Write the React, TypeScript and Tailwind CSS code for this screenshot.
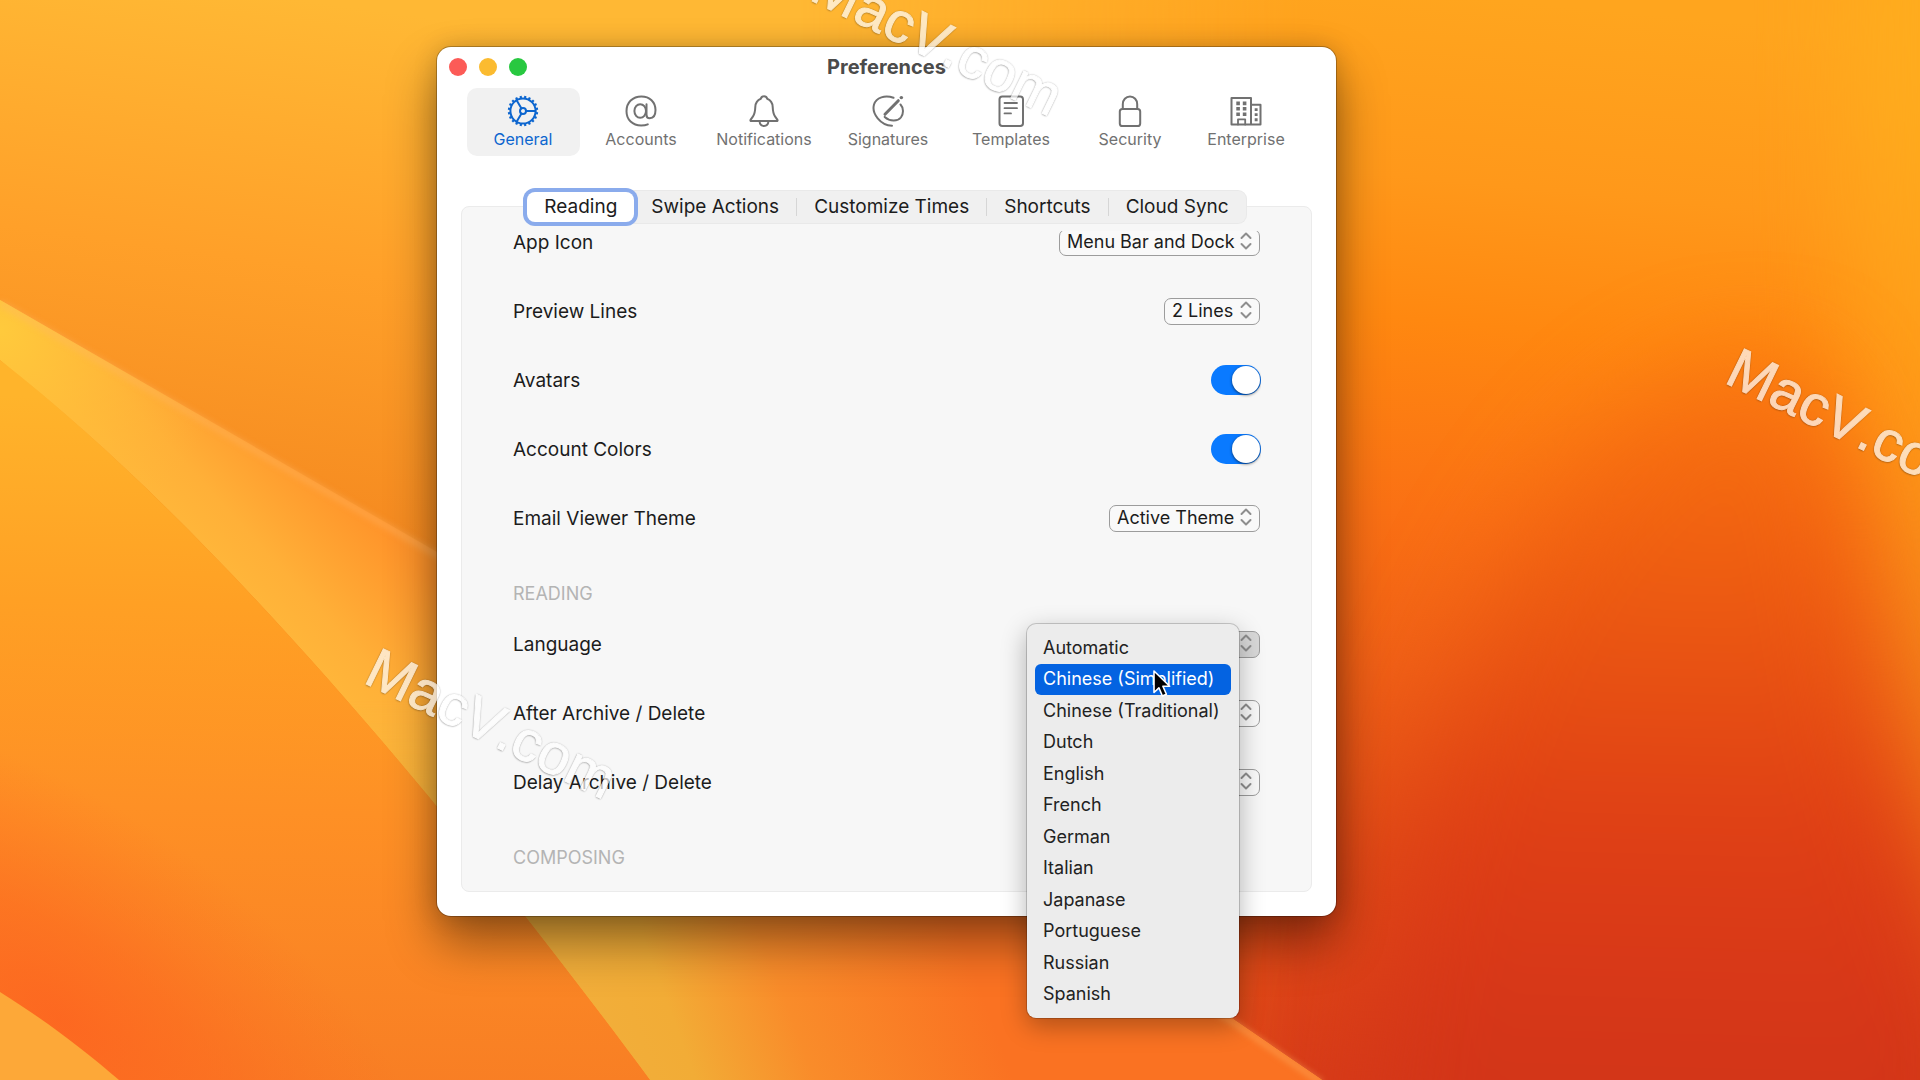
import { useState } from "react";
import type { ReactNode } from "react";

const gearTeeth = Array.from({ length: 20 }, (_, i) => i * 18);

function Glyph({ children }: { children: ReactNode }) {
  return (
    <svg
      viewBox="0 0 32 32"
      className="size-8"
      fill="none"
      stroke="currentColor"
      strokeWidth="2"
      strokeLinecap="round"
      strokeLinejoin="round"
      aria-hidden="true"
    >
      {children}
    </svg>
  );
}

const GearIcon = () => (
  <Glyph>
    <circle cx="16" cy="16" r="12.6" />
    {gearTeeth.map((a) => (
      <path key={a} d="M16 3.4V0.800" strokeWidth="2.2" strokeLinecap="butt" transform={`rotate(${a + 9} 16 16)`} />
    ))}
    <circle cx="16" cy="16" r="3" />
    <path d="M19 16h9.5M14.5 13.4 9.6 5.2M14.5 18.6l-4.9 8.2" />
  </Glyph>
);

const AtIcon = () => (
  <Glyph>
    <ellipse cx="15.2" cy="16" rx="5.8" ry="6.8" />
    <path d="M21.5 9.2v10.5c0 2.2 1 3.6 3.2 3.6 3.6 0 5.8-3.2 5.8-8.2C30.500 7 24.600 1.500 16.400 1.500 7.700 1.500 1.500 7.500 1.500 16.200c0 8.500 6 14.300 14.700 14.300 2.500 0 4.800-.4 6.600-1.200" />
  </Glyph>
);

const BellIcon = () => (
  <Glyph>
    <path d="M16 1.300c-1.700 0-2.800 1-3.200 2.500-3.400 1.300-5.300 4.200-5.500 8.200-.2 4.800-.6 7-2.300 9.400L2.700 24.600c-.6.9-.2 1.500.8 1.500h25c1 0 1.400-.6.800-1.500L27 21.400c-1.700-2.400-2.100-4.600-2.300-9.400-.2-4-2.100-6.900-5.500-8.200-.4-1.500-1.500-2.500-3.200-2.500z" />
    <path d="M11.600 26.500c.2 2.700 1.900 4.400 4.400 4.400s4.200-1.700 4.400-4.400" />
  </Glyph>
);

const SignatureIcon = () => (
  <Glyph>
    <path d="M21.500 2.800C13-.4 4.200 2.600 2 9.500-.6 18.500 8.500 30.500 20 30.800" />
    <path d="M28.500 9.500c3 3.200 3.400 9 .4 13-3.200 4-11 4.200-16.200-.6" />
    <path d="M13 19.300 26.300 5.700" strokeWidth="3" />
    <path d="M29.300 2.600h.1" strokeWidth="3.400" />
  </Glyph>
);

const TemplateIcon = () => (
  <Glyph>
    <rect x="4.500" y="1.500" width="23.500" height="29.500" rx="2.800" />
    <path d="M9.500 8h12.500M9.500 13.200h12.500M9.500 18.400h6.500" strokeWidth="1.800" />
  </Glyph>
);

const LockIcon = () => (
  <Glyph>
    <rect x="5.800" y="14" width="20.400" height="17" rx="2.600" />
    <path d="M8.800 14V9.200C8.800 4.800 11.800 1.500 16 1.500s7.200 3.300 7.200 7.700V14" />
  </Glyph>
);

const BuildingIcon = () => (
  <Glyph>
    <path d="M1.500 3h19.500v26.500H1.500zM21 9.700h9.500v19.800H21z" />
    <path d="M8 29.500v-5.200h7.200v5.200" strokeWidth="1.800" />
    <g fill="currentColor" stroke="none">
      <path d="M6.300 6.600h3.600v3.600H6.300zM12.800 6.600h3.600v3.600h-3.600zM6.300 12h3.600v3.600H6.300zM12.800 12h3.600v3.600h-3.600zM6.300 17.400h3.600V21H6.300zM12.800 17.400h3.600V21h-3.600z" />
      <path d="M24.700 13.200h2.900v2.900h-2.900zM24.700 18.200h2.900v2.900h-2.900zM24.700 23.300h2.900v2.900h-2.900z" />
    </g>
  </Glyph>
);

const sections = [
  { name: "General", icon: <GearIcon />, width: "w-[113px]" },
  { name: "Accounts", icon: <AtIcon />, width: "w-[113px]" },
  { name: "Notifications", icon: <BellIcon />, width: "w-[123px]" },
  { name: "Signatures", icon: <SignatureIcon />, width: "w-[115px]" },
  { name: "Templates", icon: <TemplateIcon />, width: "w-[121px]" },
  { name: "Security", icon: <LockIcon />, width: "w-[107px]" },
  { name: "Enterprise", icon: <BuildingIcon />, width: "w-[115px]" },
];

const tabs = ["Reading", "Swipe Actions", "Customize Times", "Shortcuts", "Cloud Sync"];

const languages = [
  "Automatic",
  "Chinese (Simplified)",
  "Chinese (Traditional)",
  "Dutch",
  "English",
  "French",
  "German",
  "Italian",
  "Japanase",
  "Portuguese",
  "Russian",
  "Spanish",
];

function Row({ id, label, children }: { id: string; label: string; children: ReactNode }) {
  return (
    <div className="flex h-[69px] items-center justify-between">
      <label htmlFor={id} className="pt-0.5">
        {label}
      </label>
      {children}
    </div>
  );
}

function Picker({ id, value, width, active }: { id: string; value: string; width: string; active?: boolean }) {
  return (
    <div className={`relative mr-px h-[27px] ${width}`}>
      <select
        id={id}
        className={`h-full w-full appearance-none rounded-[7px] border border-[#9c9c9c] pl-[7px] text-lg leading-6 outline-none ${
          active ? "bg-[#d8d8d8]" : "bg-[#f9f9f9]"
        }`}
      >
        <option>{value}</option>
      </select>
      <svg
        viewBox="0 0 12 18"
        className="pointer-events-none absolute top-1 right-2 h-[18px] w-3"
        fill="none"
        stroke="#8e8e8e"
        strokeWidth="2"
        strokeLinecap="round"
        strokeLinejoin="round"
        aria-hidden="true"
      >
        <path d="M1.500 6 6 1.500 10.500 6M1.500 12 6 16.500 10.500 12" />
      </svg>
    </div>
  );
}

function Toggle({ id }: { id: string }) {
  const [on, setOn] = useState(true);
  return (
    <span className="relative h-[30px] w-[50px]">
      <input
        id={id}
        type="checkbox"
        role="switch"
        checked={on}
        onChange={() => setOn(!on)}
        className="peer block h-full w-full appearance-none rounded-full bg-[#d5d5d5] checked:bg-[#0a7aff]"
      />
      <span className="pointer-events-none absolute top-px left-px size-7 rounded-full bg-white shadow-[0_1px_3px_rgba(0,0,0,0.6)] peer-checked:left-[21px]" />
    </span>
  );
}

function Heading({ children }: { children: ReactNode }) {
  return <h2 className="h-[57px] pt-[27px] text-lg leading-[30px] text-[#b4b4b4]">{children}</h2>;
}

function Wallpaper() {
  return (
    <svg
      viewBox="0 0 1920 1080"
      preserveAspectRatio="xMidYMid slice"
      className="absolute inset-0 h-full w-full"
      aria-hidden="true"
    >
      <defs>
        <linearGradient id="sky" gradientUnits="userSpaceOnUse" x1="300" y1="0" x2="230" y2="520">
          <stop offset="0" stopColor="#ffb834" />
          <stop offset="0.5" stopColor="#ffa029" />
          <stop offset="1" stopColor="#f58a20" />
        </linearGradient>
        <linearGradient id="east" gradientUnits="userSpaceOnUse" x1="1500" y1="0" x2="1400" y2="1080">
          <stop offset="0" stopColor="#ffa51e" />
          <stop offset="0.17" stopColor="#ff981a" />
          <stop offset="0.3" stopColor="#ff8810" />
          <stop offset="0.48" stopColor="#fa7014" />
          <stop offset="0.62" stopColor="#f06016" />
          <stop offset="0.8" stopColor="#e04a16" />
          <stop offset="1" stopColor="#d83c18" />
        </linearGradient>
        <linearGradient id="eastMask" gradientUnits="userSpaceOnUse" x1="800" y1="0" x2="1300" y2="0">
          <stop offset="0" stopColor="#fff" stopOpacity="0" />
          <stop offset="1" stopColor="#fff" />
        </linearGradient>
        <mask id="fadeEast">
          <rect width="1920" height="1080" fill="url(#eastMask)" />
        </mask>
        <linearGradient id="rim" gradientUnits="userSpaceOnUse" x1="0" y1="100" x2="0" y2="1000">
          <stop offset="0" stopColor="#ffac1e" />
          <stop offset="0.35" stopColor="#ff9a18" />
          <stop offset="0.6" stopColor="#f6881a" />
          <stop offset="1" stopColor="#ee6a18" />
        </linearGradient>
        <linearGradient id="dome" gradientUnits="userSpaceOnUse" x1="1680" y1="330" x2="1660" y2="1080">
          <stop offset="0" stopColor="#fa7a12" />
          <stop offset="0.18" stopColor="#f56a10" />
          <stop offset="0.4" stopColor="#ea5612" />
          <stop offset="0.65" stopColor="#df4015" />
          <stop offset="0.85" stopColor="#d83818" />
          <stop offset="1" stopColor="#d23518" />
        </linearGradient>
        <linearGradient id="ray" gradientUnits="userSpaceOnUse" x1="240" y1="590" x2="350" y2="490">
          <stop offset="0" stopColor="#ffb63a" />
          <stop offset="0.3" stopColor="#ffb038" />
          <stop offset="1" stopColor="#ff942a" />
        </linearGradient>
        <linearGradient id="rayLow" gradientUnits="userSpaceOnUse" x1="590" y1="1010" x2="940" y2="880">
          <stop offset="0" stopColor="#f2ae3a" />
          <stop offset="0.2" stopColor="#f2ac36" />
          <stop offset="0.5" stopColor="#f98c2a" />
          <stop offset="1" stopColor="#fa7222" />
        </linearGradient>
        <linearGradient id="rayMask" gradientUnits="userSpaceOnUse" x1="0" y1="700" x2="0" y2="900">
          <stop offset="0" stopColor="#fff" stopOpacity="0" />
          <stop offset="1" stopColor="#fff" />
        </linearGradient>
        <mask id="fadeRay">
          <rect width="1920" height="1080" fill="url(#rayMask)" />
        </mask>
        <radialGradient id="apex" gradientUnits="userSpaceOnUse" cx="0" cy="330" r="230">
          <stop offset="0" stopColor="#ffca3c" />
          <stop offset="1" stopColor="#ffb838" stopOpacity="0" />
        </radialGradient>
        <linearGradient id="south" gradientUnits="userSpaceOnUse" x1="180" y1="400" x2="160" y2="1080">
          <stop offset="0" stopColor="#ffb42b" />
          <stop offset="0.3" stopColor="#ffa024" />
          <stop offset="0.6" stopColor="#fe9025" />
          <stop offset="1" stopColor="#f87e24" />
        </linearGradient>
        <radialGradient
          id="ember"
          gradientUnits="userSpaceOnUse"
          cx="0"
          cy="0"
          r="1"
          gradientTransform="translate(60 1020) rotate(35) scale(440 210)"
        >
          <stop offset="0" stopColor="#fd6520" stopOpacity="0.9" />
          <stop offset="0.4" stopColor="#fd6820" stopOpacity="0.6" />
          <stop offset="1" stopColor="#fd7022" stopOpacity="0" />
        </radialGradient>
        <filter id="soft" x="-30%" y="-30%" width="160%" height="160%" colorInterpolationFilters="sRGB">
          <feGaussianBlur stdDeviation="50" />
        </filter>
        <filter id="line" x="-5%" y="-5%" width="110%" height="110%" colorInterpolationFilters="sRGB">
          <feGaussianBlur stdDeviation="3" />
        </filter>
      </defs>
      <rect width="1920" height="1080" fill="url(#sky)" />
      <g mask="url(#fadeEast)">
        <rect width="1920" height="1080" fill="url(#east)" />
      </g>
      <path d="M1850-150h300v1400h-200c-20-200-70-450-90-650-20-200-20-500-10-750z" fill="url(#rim)" filter="url(#soft)" />
      <path
        d="M1340 1300c20-250 60-520 160-710 70-130 170-225 260-225 70 0 90 100 110 260 20 150 70 260 120 400v275z"
        fill="url(#dome)"
        filter="url(#soft)"
      />
      <path d="M0 300 437 552 1230 1017 1322 1080H650C480 850 230 540 0 360z" fill="url(#ray)" />
      <g mask="url(#fadeRay)">
        <path d="M0 300 437 552 1230 1017 1322 1080H650C480 850 230 540 0 360z" fill="url(#rayLow)" />
      </g>
      <path d="M0 300 437 552V810C300 650 150 490 0 360z" fill="url(#apex)" />
      <path d="M0 303 437 555 1230 1020 1322 1083" fill="none" stroke="#ffb868" strokeOpacity="0.5" strokeWidth="5" filter="url(#line)" />
      <path d="M0 360C230 540 480 850 650 1080H0z" fill="url(#south)" />
      <path d="M0 360C230 540 480 850 650 1080H0z" fill="url(#ember)" />
      <path d="M0 992c45 28 84 58 119 88H0z" fill="#fda838" />
    </svg>
  );
}

function Watermark({ place }: { place: string }) {
  return (
    <div
      aria-hidden="true"
      className={`pointer-events-none absolute z-30 origin-[0_48px] rotate-[26deg] text-[57px] leading-none whitespace-nowrap text-white opacity-70 [font-kerning:none] [-webkit-text-stroke:1px_white] [text-shadow:0_1px_2px_rgba(0,0,0,0.4),0_0_2px_rgba(0,0,0,0.7)] font-['Liberation_Sans',Arial,sans-serif] ${place}`}
    >
      MacV.com
    </div>
  );
}

export default function App() {
  const [section, setSection] = useState("General");
  const [tab, setTab] = useState("Reading");

  return (
    <div className="relative h-screen w-full overflow-hidden bg-[#ff9426] font-[Inter,'Noto_Sans',sans-serif] text-[19px] leading-7 text-[#1c1c1c]">
      <Wallpaper />

      <main className="absolute top-[47px] left-[437px] w-[899px] rounded-[14px] bg-white px-6 pb-6 shadow-[0_0_0_1px_rgba(0,0,0,0.25),0_26px_50px_rgba(0,0,0,0.42),0_0_24px_rgba(0,0,0,0.16)]">
        <header className="relative flex h-[41px] items-center justify-center pb-0.5">
          <div className="absolute left-[-12px] flex gap-3">
            <button type="button" aria-label="Close" className="size-[18px] rounded-full bg-[#fc5b57]" />
            <button type="button" aria-label="Minimize" className="size-[18px] rounded-full bg-[#fbbb30]" />
            <button type="button" aria-label="Zoom" className="size-[18px] rounded-full bg-[#28c840]" />
          </div>
          <h1 className="text-xl leading-6 font-bold text-[#4b4b4b]">Preferences</h1>
        </header>

        <nav className="flex justify-center gap-[5px] pr-[3px]">
          {sections.map((s) => (
            <button
              key={s.name}
              type="button"
              onClick={() => setSection(s.name)}
              className={`flex h-[68px] flex-col items-center gap-0.5 rounded-[10px] pt-[7px] text-base leading-5 ${s.width} ${
                s.name === section ? "bg-[#f1f1f1] text-[#0d66cf]" : "text-[#717171]"
              }`}
            >
              {s.icon}
              {s.name}
            </button>
          ))}
        </nav>

        <div
          role="tablist"
          className="relative z-10 mx-auto mt-[35px] flex h-8 w-fit items-center rounded-lg bg-[#f0f0f0] shadow-[0_0_0_1px_#e9e9e9]"
        >
          {tabs.map((t, i) => (
            <button
              key={t}
              type="button"
              role="tab"
              aria-selected={t === tab}
              onClick={() => setTab(t)}
              className={
                t === tab
                  ? "h-[30px] rounded-lg bg-white px-[17px] leading-6 shadow-[0_0_0_4px_#8aabec]"
                  : `px-[17px] leading-[18px] ${i > 1 ? "border-l border-[#d6d6d6]" : ""}`
              }
            >
              {t}
            </button>
          ))}
        </div>

        <section className="-mt-[17px] rounded-lg border border-[#ebebeb] bg-[#f7f7f7] pt-6 pr-[50px] pb-[18px] pl-[51px]">
          <div className="overflow-hidden">
            <div className="-mt-6">
              <Row id="app-icon" label="App Icon">
                <Picker id="app-icon" value="Menu Bar and Dock" width="w-[201px]" />
              </Row>
              <Row id="preview-lines" label="Preview Lines">
                <Picker id="preview-lines" value="2 Lines" width="w-[96px]" />
              </Row>
              <Row id="avatars" label="Avatars">
                <Toggle id="avatars" />
              </Row>
              <Row id="account-colors" label="Account Colors">
                <Toggle id="account-colors" />
              </Row>
              <Row id="viewer-theme" label="Email Viewer Theme">
                <Picker id="viewer-theme" value="Active Theme" width="w-[151px]" />
              </Row>
              <Heading>READING</Heading>
              <Row id="language" label="Language">
                <Picker id="language" value="Automatic" width="w-[128px]" active />
              </Row>
              <Row id="after-archive" label="After Archive / Delete">
                <Picker id="after-archive" value="Go Back" width="w-[116px]" />
              </Row>
              <Row id="delay-archive" label="Delay Archive / Delete">
                <Picker id="delay-archive" value="None" width="w-[88px]" />
              </Row>
              <Heading>COMPOSING</Heading>
            </div>
          </div>
        </section>

        <ul
          role="menu"
          aria-label="Language"
          className="absolute top-[577px] left-[590px] z-20 flex h-[394px] w-[212px] flex-col rounded-[9px] bg-[#ececec] p-2 shadow-[0_0_0_1px_rgba(0,0,0,0.18),0_8px_26px_rgba(0,0,0,0.3)]"
        >
          {languages.map((l) => (
            <li key={l} role="none" className="flex flex-1">
              <button
                type="button"
                role="menuitem"
                className={`w-full rounded-md px-2 text-left text-lg leading-6 ${
                  l === "Chinese (Simplified)" ? "bg-[#0463e1] text-white" : "text-[#222]"
                }`}
              >
                {l}
              </button>
            </li>
          ))}
        </ul>
      </main>

      <Watermark place="top-[-49px] left-[808px]" />
      <Watermark place="top-[634px] left-[362px]" />
      <Watermark place="top-[334px] left-[1723px]" />

      <svg viewBox="0 0 20 30" className="pointer-events-none absolute top-[669px] left-[1152px] z-40 h-[30px] w-5" aria-hidden="true">
        <path
          d="M2 2v21.500l4.900-4.700 3.500 8.200 4-1.700-3.500-8h6.800z"
          fill="#000"
          stroke="#fff"
          strokeWidth="1.600"
          strokeLinejoin="round"
        />
      </svg>
    </div>
  );
}
